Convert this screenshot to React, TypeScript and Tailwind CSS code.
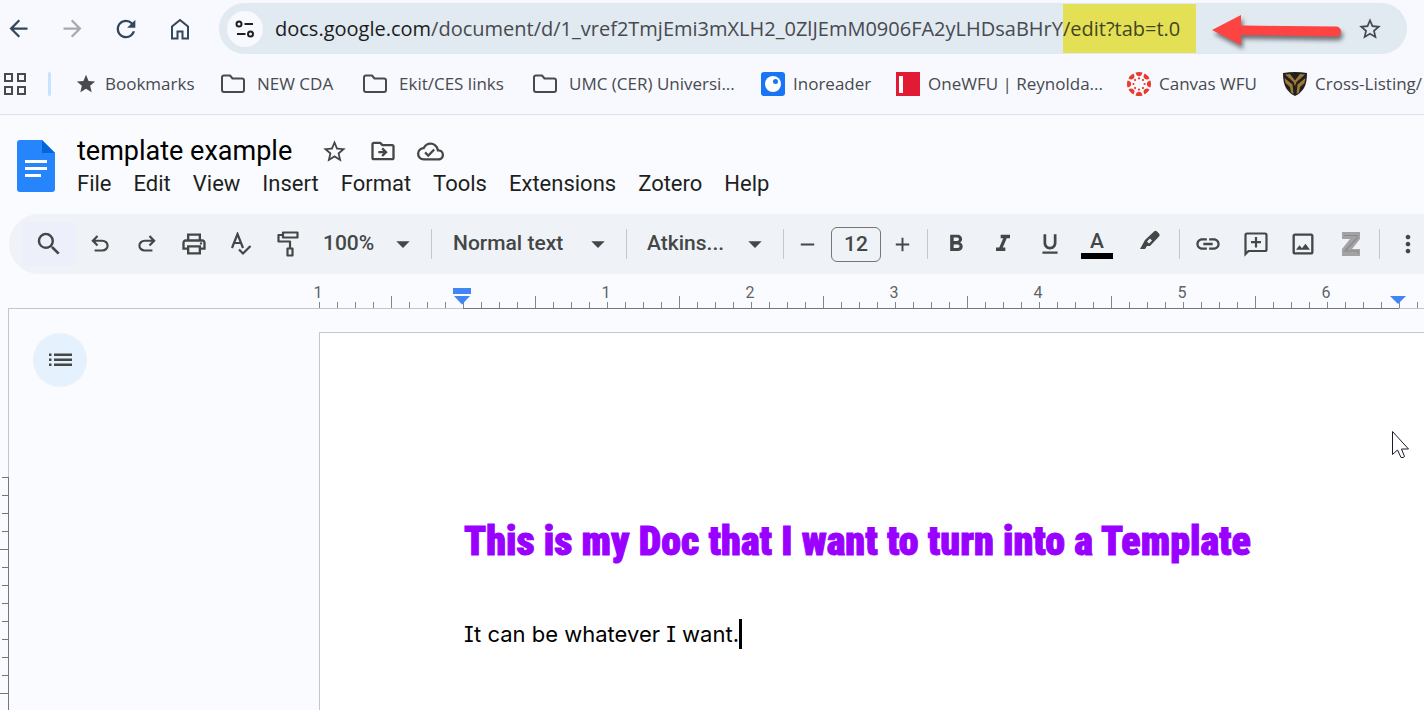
import type { ReactNode } from 'react';
import {
  MdAdd,
  MdArrowBack,
  MdArrowDropDown,
  MdArrowForward,
  MdFormatBold,
  MdFormatItalic,
  MdFormatUnderlined,
  MdLink,
  MdMoreVert,
  MdOutlineCloudDone,
  MdOutlineDriveFileMove,
  MdOutlineImage,
  MdOutlinePrint,
  MdRefresh,
  MdRemove,
  MdSearch,
  MdStar,
  MdStarBorder,
} from 'react-icons/md';

/* ---------- Icons ---------- */

const HomeIcon = () => (
  <svg width="20" height="22" viewBox="0 0 20 22" fill="none" stroke="currentColor" strokeWidth="2">
    <path d="M2 20.5V8.5L10 2l8 6.500V20.500H12.500V13.500H7.500V20.500Z" />
  </svg>
);

const SiteInfoIcon = () => (
  <svg width="20" height="18" viewBox="0 0 20 18" fill="none" stroke="currentColor" strokeWidth="2">
    <circle cx="4" cy="4" r="2.500" />
    <path d="M9.500 4H18M2 14h8.500" />
    <circle cx="15.500" cy="14" r="2.500" />
  </svg>
);

const AppsIcon = () => (
  <svg width="22" height="22" viewBox="0 0 22 22" fill="none" stroke="currentColor" strokeWidth="2">
    <path d="M1 1h7v7H1zM14 1h7v7h-7zM1 14h7v7H1zM14 14h7v7h-7z" />
  </svg>
);

const FolderIcon = () => (
  <svg width="24" height="19" viewBox="0 0 24 19" fill="none" stroke="currentColor" strokeWidth="2" strokeLinejoin="round">
    <path d="M3 1.500h6l2.500 3H21q2 0 2 2V16q0 2-2 2H3q-2 0-2-2V3.500q0-2 2-2Z" />
  </svg>
);

const InoreaderIcon = () => (
  <svg width="24" height="24" viewBox="0 0 24 24">
    <rect width="24" height="24" rx="3" fill="#1875f3" />
    <circle cx="12" cy="12" r="8" fill="#fff" />
    <circle cx="14.500" cy="9.500" r="2.500" fill="#1875f3" />
  </svg>
);

const OneWfuIcon = () => (
  <svg width="24" height="24" viewBox="0 0 24 24">
    <rect width="24" height="24" fill="#e01b33" />
    <rect x="3" y="4" width="4" height="17" fill="#fff" />
  </svg>
);

const CanvasIcon = () => (
  <svg width="24" height="24" viewBox="0 0 24 24" fill="#e63b2e">
    {[0, 45, 90, 135, 180, 225, 270, 315].map((angle) => (
      <g key={angle} transform={`rotate(${angle} 12 12)`}>
        <path d="M8.500 .6Q12 -.6 15.500 .6Q14.800 4.200 12 4.200T8.500 .6Z" />
        <circle cx="12" cy="6.400" r="1.100" />
      </g>
    ))}
  </svg>
);

const ShieldIcon = () => (
  <svg width="24" height="24" viewBox="0 0 24 24">
    <path d="M0 1Q12-1 24 1q0 10-3 15-3 5-9 8-6-3-9-8Q0 11 0 1Z" fill="#231f20" />
    <path
      d="M2 2.500 7 2l5 6.500L17 2l5 .5-8.500 7.500L12 14 10.500 10ZM1.500 6l8 6.500L10.500 22 8 20.500 7 15 2.500 11ZM22.500 6l-8 6.500L13.500 22 16 20.500 17 15l4.500-4Z"
      fill="#9c7a35"
    />
  </svg>
);

const DocsLogo = () => (
  <svg width="38" height="52" viewBox="0 0 38 52">
    <path d="M3 0H25L38 13V49q0 3-3 3H3q-3 0-3-3V3Q0 0 3 0Z" fill="#2684fc" />
    <path d="M25 0 38 13H25Z" fill="#0066da" />
    <path d="M8 20h22v3H8zM8 27h22v3H8zM8 34h16v3H8z" fill="#fff" />
  </svg>
);

const UndoIcon = () => (
  <svg width="26" height="26" viewBox="0 -960 960 960" fill="currentColor">
    <path d="M280-200v-80h284q63 0 109.500-40T720-420q0-60-46.500-100T564-560H312l104 104-56 56-200-200 200-200 56 56-104 104h252q97 0 166.500 63T800-420q0 94-69.500 157T564-200H280Z" />
  </svg>
);

const RedoIcon = () => (
  <svg width="26" height="26" viewBox="0 -960 960 960" fill="currentColor">
    <path d="M396-200q-97 0-166.500-63T160-420q0-94 69.500-157T396-640h252L544-744l56-56 200 200-200 200-56-56 104-104H396q-63 0-109.500 40T240-420q0 60 46.500 100T396-280h284v80H396Z" />
  </svg>
);

const SpellcheckIcon = () => (
  <svg width="22" height="24" viewBox="0 0 22 24" fill="none" stroke="currentColor" strokeWidth="2.200">
    <path d="M2 16 7.500 2 13 16M4 11h7.500M9 17.500l4 4L20.500 14" />
  </svg>
);

const PaintFormatIcon = () => (
  <svg width="22" height="26" viewBox="0 0 22 26" fill="none" stroke="currentColor" strokeWidth="2.200" strokeLinejoin="round">
    <path d="M6 1.500h14.500v5H6zM6 4H1.500v6.500H13v7M10.500 17.500h5v7h-5z" />
  </svg>
);

const HighlighterIcon = () => (
  <svg width="22" height="28" viewBox="0 0 22 28">
    <path d="M1 19 6 10 15 1.500Q16.500 0 18 1.500L20 3.500Q21.500 5 20 6.500L11 16H8L6 19Z" fill="currentColor" />
    <path d="M8 11.500 11 8.500 13 10.500 10 13.500Z" fill="#eff3f8" />
  </svg>
);

const AddCommentIcon = () => (
  <svg width="24" height="25" viewBox="0 0 24 25" fill="none" stroke="currentColor" strokeWidth="2.200">
    <path d="M1.500 22V3q0-1.500 1.500-1.500H21q1.500 0 1.500 1.500V17.500q0 1.500-1.500 1.500H4.500Z" />
    <path d="M12 5v10.500M7 10.200H17" />
  </svg>
);

const ZoteroIcon = () => (
  <svg width="20" height="26" viewBox="0 0 20 26">
    <path d="M1 1h18v7l-8 10h8v7H1v-7L9 8H1Z" fill="#a3a3a3" />
    <path d="M3 4.500h13v2.500L4 20h13v2.500" fill="none" stroke="#8a8a8a" strokeWidth="1.200" />
  </svg>
);

const OutlineIcon = () => (
  <svg width="23" height="14" viewBox="0 0 23 14" fill="currentColor">
    <path d="M0 .5h2.500v2.500H0zM5 .5h18v2.500H5zM0 5.500h2.500v2.500H0zM5 5.500h18v2.500H5zM0 10.500h2.500v2.500H0zM5 10.500h18v2.500H5z" />
  </svg>
);

const ArrowAnnotation = () => (
  <svg className="absolute top-2 right-14 drop-shadow-[2px_4px_2px_rgba(0,0,0,0.5)]" width="140" height="36" viewBox="0 0 140 36">
    <path d="M1 19 30 4V14.500L125 15.500a5 5 0 0 1 0 10L30 24V34Z" fill="#fe4343" />
  </svg>
);

const PointerIcon = () => (
  <svg className="absolute top-[97px] right-3.5" width="20" height="30" viewBox="0 0 20 30">
    <path d="M2.500 1.500V24.500L7.500 20 11 27.500H13L14.500 26.500 11.500 19H18.500Z" fill="#fff" stroke="#1c1c28" />
  </svg>
);

/* ---------- Browser chrome ---------- */

function NavButton({ label, children }: { label: string; children: ReactNode }) {
  return (
    <button aria-label={label} className="flex h-12 w-[54px] shrink-0 items-center justify-center">
      {children}
    </button>
  );
}

function AddressBar() {
  return (
    <div className="flex h-[57px] items-center pr-[17px] text-[#33475b]">
      <div className="-ml-[9px] mr-3 flex">
        <NavButton label="Back"><MdArrowBack size={27} /></NavButton>
        <NavButton label="Forward"><MdArrowForward size={27} className="text-[#a6a9ad]" /></NavButton>
        <NavButton label="Reload"><MdRefresh size={28} /></NavButton>
        <NavButton label="Home"><HomeIcon /></NavButton>
      </div>
      <div className="relative flex h-[51px] min-w-0 grow items-center rounded-full bg-[#e1e9f1] pl-2 pr-6 text-[#474a4f]">
        <button aria-label="Site information" className="flex size-9 shrink-0 items-center justify-center rounded-full bg-[#f8f9fe] text-[#1f1f1f]">
          <SiteInfoIcon />
        </button>
        <div
          role="textbox"
          aria-label="Address"
          contentEditable
          suppressContentEditableWarning
          spellCheck={false}
          className="ml-3 whitespace-nowrap font-['Open_Sans',sans-serif] text-[20px] leading-[49px] outline-none"
        >
          <span className="text-[#1b1c20]">docs.google.com</span>
          <span>/document/d/1_vref2TmjEmi3mXLH2_0ZlJEmM0906FA2yLHDsaBHrY</span>
          <mark className="inline-block bg-[#e3e055] pr-4 text-[#43461f]">/edit?tab=t.0</mark>
        </div>
        <button aria-label="Bookmark this tab" className="ml-auto shrink-0"><MdStarBorder size={26} /></button>
        <ArrowAnnotation />
      </div>
    </div>
  );
}

const bookmarks = [
  { label: 'Bookmarks', icon: <MdStar size={22} />, width: 'w-[146px]', gap: 'gap-2' },
  { label: 'NEW CDA', icon: <FolderIcon />, width: 'w-[142px]' },
  { label: 'Ekit/CES links', icon: <FolderIcon />, width: 'w-[170px]' },
  { label: 'UMC (CER) Universi...', icon: <FolderIcon />, width: 'w-[228px]' },
  { label: 'Inoreader', icon: <InoreaderIcon />, width: 'w-[135px]', gap: 'gap-2' },
  { label: 'OneWFU | Reynolda...', icon: <OneWfuIcon />, width: 'w-[231px]', gap: 'gap-2' },
  { label: 'Canvas WFU', icon: <CanvasIcon />, width: 'w-[156px]', gap: 'gap-2' },
  { label: 'Cross-Listing/', icon: <ShieldIcon />, width: 'w-[142px]', gap: 'gap-2' },
];

function BookmarksBar() {
  return (
    <nav className="flex h-[58px] items-center overflow-hidden whitespace-nowrap border-b border-[#d9e1ed] pb-1 pl-1 font-['Open_Sans',sans-serif] text-[17px] text-[#474a4f]">
      <button aria-label="Apps" className="shrink-0"><AppsIcon /></button>
      <span className="ml-[22px] mr-6 h-6 w-[3px] shrink-0 rounded bg-[#c7e3fd]" />
      {bookmarks.map((b) => (
        <a key={b.label} href="#" className={`flex shrink-0 items-center ${b.gap ?? 'gap-3'} ${b.width}`}>
          <span className="shrink-0">{b.icon}</span>
          {b.label}
        </a>
      ))}
    </nav>
  );
}

/* ---------- Document header ---------- */

const menus = ['File', 'Edit', 'View', 'Insert', 'Format', 'Tools', 'Extensions', 'Zotero', 'Help'];

function DocHeader() {
  return (
    <header className="flex h-[99px] shrink-0 gap-[22px] pl-[17px] pt-[18px]">
      <a href="#" aria-label="Docs home" className="pt-[7px]"><DocsLogo /></a>
      <div>
        <div className="flex h-9 items-center text-[#444746]">
          <input
            aria-label="Document title"
            defaultValue="template example"
            className="w-[244px] bg-transparent text-[27px] leading-9 text-black outline-none"
          />
          <button aria-label="Star" className="w-12"><MdStarBorder size={27} /></button>
          <button aria-label="Move" className="w-12"><MdOutlineDriveFileMove size={28} /></button>
          <button aria-label="Saved to Drive"><MdOutlineCloudDone size={27} /></button>
        </div>
        <nav className="flex gap-[22px] text-[22px] leading-[30px] text-[#1f1f1f]">
          {menus.map((menu) => (
            <button key={menu}>{menu}</button>
          ))}
        </nav>
      </div>
    </header>
  );
}

function ToolButton({ label, width = 'w-[47px]', children }: { label: string; width?: string; children: ReactNode }) {
  return (
    <button aria-label={label} className={`flex h-11 shrink-0 items-center justify-center ${width}`}>
      {children}
    </button>
  );
}

function Dropdown({ label, value, width }: { label: string; value: string; width: string }) {
  return (
    <button aria-label={label} className={`flex h-11 shrink-0 items-center justify-between pr-3 ${width}`}>
      {value}
      <MdArrowDropDown size={32} />
    </button>
  );
}

const Separator = ({ className = '' }: { className?: string }) => (
  <span className={`h-[30px] w-px shrink-0 bg-[#c7c7c7] ${className}`} />
);

function Toolbar() {
  return (
    <div className="ml-[9px] flex h-[60px] shrink-0 items-center overflow-hidden whitespace-nowrap rounded-l-full bg-[#eff3f8] pl-[13px] text-[21px] font-medium text-[#444746]">
      <ToolButton label="Search the menus" width="w-[54px] bg-[#edf0fa]"><MdSearch size={30} /></ToolButton>
      <ToolButton label="Undo"><UndoIcon /></ToolButton>
      <ToolButton label="Redo"><RedoIcon /></ToolButton>
      <ToolButton label="Print"><MdOutlinePrint size={28} /></ToolButton>
      <ToolButton label="Spelling and grammar check"><SpellcheckIcon /></ToolButton>
      <ToolButton label="Paint format"><PaintFormatIcon /></ToolButton>
      <Dropdown label="Zoom" value="100%" width="w-[120px] pl-3" />
      <Separator className="mr-px" />
      <Dropdown label="Styles" value="Normal text" width="w-[193px] pl-5" />
      <Separator />
      <Dropdown label="Font" value="Atkins..." width="w-[156px] pl-5" />
      <Separator />
      <ToolButton label="Decrease font size"><MdRemove size={23} /></ToolButton>
      <input
        aria-label="Font size"
        defaultValue="12"
        className="h-[35px] w-[50px] shrink-0 rounded-md border border-[#747775] bg-transparent text-center outline-none"
      />
      <ToolButton label="Increase font size" width="w-[42px]"><MdAdd size={23} /></ToolButton>
      <Separator className="ml-1 mr-1" />
      <ToolButton label="Bold"><MdFormatBold size={28} /></ToolButton>
      <ToolButton label="Italic"><MdFormatItalic size={28} /></ToolButton>
      <ToolButton label="Underline"><MdFormatUnderlined size={26} /></ToolButton>
      <ToolButton label="Text color" width="w-12">
        <span className="w-8 border-b-[6px] border-black leading-[24px]">A</span>
      </ToolButton>
      <ToolButton label="Highlight color" width="w-[58px]"><HighlighterIcon /></ToolButton>
      <Separator className="mr-1" />
      <ToolButton label="Insert link" width="w-12"><MdLink size={28} /></ToolButton>
      <ToolButton label="Add comment" width="w-[47px]"><AddCommentIcon /></ToolButton>
      <ToolButton label="Insert image" width="w-12"><MdOutlineImage size={28} /></ToolButton>
      <ToolButton label="Zotero citation" width="w-12"><ZoteroIcon /></ToolButton>
      <Separator className="ml-1 mr-1" />
      <ToolButton label="More" width="w-12"><MdMoreVert size={28} /></ToolButton>
    </div>
  );
}

/* ---------- Rulers ---------- */

// Eight ticks to the inch; the left margin ends at tick 8, the right one at tick 60.
const ticks = Array.from({ length: 64 }, (_, i) => i);

function HorizontalRuler() {
  return (
    <div className="ml-2 flex h-[35px] shrink-0 overflow-hidden text-[16px] leading-none text-[#5f6368]">
      <div className="w-[311px] shrink-0 border-b border-[#c4c7c5]" />
      {ticks.map((i) => (
        <div
          key={i}
          className={`relative flex w-[18px] shrink-0 items-end border-b ${i >= 8 && i < 60 ? 'border-[#747775]' : 'border-[#c4c7c5]'}`}
        >
          <span className={`w-px bg-[#80868b] ${i % 8 === 4 && i !== 60 ? 'h-3' : 'h-[6px]'}`} />
          {i % 8 === 0 && i !== 8 && (
            <span className="absolute -left-[9px] top-[11px] w-4 text-center">{Math.abs(i - 8) / 8}</span>
          )}
          {i === 8 && (
            <svg className="absolute -left-[10px] top-[14px]" width="18" height="17" viewBox="0 0 18 17" fill="#4285f4">
              <path d="M0 0h18v6H0zM1 8h16l-8 8.500Z" />
            </svg>
          )}
          {i === 60 && (
            <svg className="absolute -left-[9px] top-[21px]" width="17" height="10" viewBox="0 0 17 10" fill="#4285f4">
              <path d="M0 1h16L8 9Z" />
            </svg>
          )}
        </div>
      ))}
      <div className="grow border-b border-[#c4c7c5]" />
    </div>
  );
}

function VerticalRuler() {
  return (
    <div className="flex w-[9px] shrink-0 flex-col overflow-hidden">
      <div className="h-[168px] shrink-0 border-r border-[#c4c7c5]" />
      {ticks.map((i) => (
        <div key={i} className="flex h-[18px] shrink-0 justify-end border-r border-[#747775]">
          <span className={`h-px bg-[#747775] ${i % 8 === 4 ? 'w-2' : 'w-[6px]'}`} />
        </div>
      ))}
    </div>
  );
}

/* ---------- Page ---------- */

export default function App() {
  return (
    <div className="flex h-screen flex-col overflow-hidden bg-[#fafbfe] font-['Roboto',sans-serif]">
      <div className="shrink-0 bg-[#f8f9fe]">
        <AddressBar />
        <BookmarksBar />
      </div>
      <DocHeader />
      <Toolbar />
      <HorizontalRuler />
      <div className="flex min-h-0 grow">
        <VerticalRuler />
        <aside className="w-[310px] shrink-0 pl-6 pt-6">
          <button aria-label="Show outline" className="flex size-[54px] items-center justify-center rounded-full bg-[#e5f2fe] text-[#444746]">
            <OutlineIcon />
          </button>
        </aside>
        <main className="relative mt-[23px] min-w-0 grow border-l border-t border-[#c4c7c5] bg-white pl-36 pt-[180px]">
          <h1 className="whitespace-nowrap font-['Roboto_Condensed','Roboto',sans-serif] text-[40px] font-black leading-[58px] text-[#9900ff] [-webkit-text-stroke:1px_#9900ff]">
            This is my Doc that I want to turn into a Template
          </h1>
          <p className="mt-[47px] flex items-center font-['Inter',sans-serif] text-[22px] leading-8 text-black [font-feature-settings:'cv08']">
            It can be whatever I want.
            <span className="h-[30px] w-[3px] bg-black" />
          </p>
          <PointerIcon />
        </main>
      </div>
    </div>
  );
}
